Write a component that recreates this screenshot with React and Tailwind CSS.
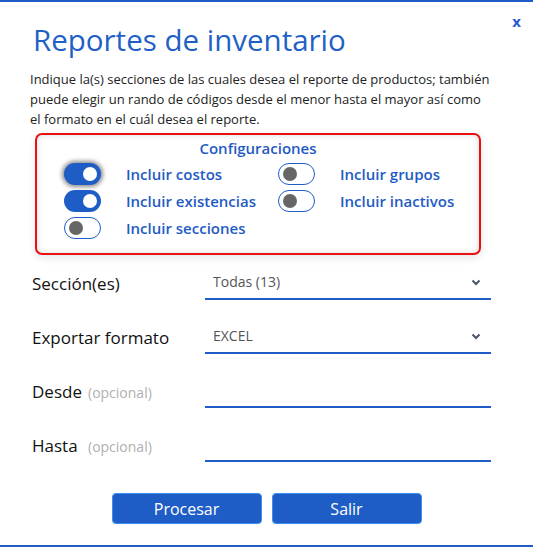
import React from "react";

function Toggle({ on, focus }) {
  return (
    <div
      className={
        "w-[37px] h-[22px] rounded-full flex items-center px-[4px] " +
        (on
          ? "bg-[#1f5dc6] justify-end"
          : "border border-[#1f5dc6] bg-white justify-start") +
        (focus ? " shadow-[0_0_4px_2px_rgba(0,0,0,0.45)]" : "")
      }
    >
      <div
        className={
          "w-[14px] h-[14px] rounded-full " + (on ? "bg-white" : "bg-[#666]")
        }
      />
    </div>
  );
}

function ToggleRow({ on, focus, label }) {
  return (
    <div className="flex items-center h-[22px]">
      <Toggle on={on} focus={focus} />
      <span className="ml-[25px] text-[15px] text-[#1f5bc4] font-semibold leading-none">
        {label}
      </span>
    </div>
  );
}

function Chevron() {
  return (
    <svg width="10" height="7" viewBox="0 0 10 7" className="mr-[10px]">
      <path d="M1.5 1.5 L5 5 L8.5 1.5" stroke="#4a5568" strokeWidth="2" fill="none" />
    </svg>
  );
}

function FieldRow({ label, hint, value, select }) {
  return (
    <div className="flex h-[54px] items-start">
      <div className="w-[173px] pt-[14px] flex items-baseline">
        <span className={"text-[17px] text-[#111] leading-[23px] " + (hint ? "w-[56px]" : "")}>{label}</span>
        {hint && <span className="text-[14px] text-[#b0b0b0]">{hint}</span>}
      </div>
      <div className="w-[286px] h-[42px] border-b-2 border-[#1f5dc6] flex items-start justify-between">
        <span className="pl-[8px] pt-[14px] text-[14px] leading-[19px] text-[#555]">{value}</span>
        {select && (
          <div className="pt-[21px]">
            <Chevron />
          </div>
        )}
      </div>
    </div>
  );
}

export default function App() {
  return (
    <div
      className="w-[533px] h-[547px] bg-white border-t-[2px] border-b-[2px] border-[#1f5dc6] relative"
      style={{ fontFamily: '"Open Sans", "Noto Sans", sans-serif' }}
    >
      <div className="absolute right-[12px] top-[8px] text-[15px] font-bold text-[#2a5bd7]">x</div>
      <h1 className="pl-[33px] pt-[18px] text-[29.5px] leading-[40px] text-[#1f5fc6] font-normal">
        Reportes de inventario
      </h1>
      <p className="pl-[30px] pr-[40px] mt-[9px] text-[13px] leading-[20px] text-[#222]">
        Indique la(s) secciones de las cuales desea el reporte de productos; también puede elegir un rando de códigos desde el menor hasta el mayor así como el formato en el cuál desea el reporte.
      </p>
      <div className="ml-[35px] mt-[4px] w-[446px] h-[122px] border-2 border-[#e81010] rounded-[7px] shadow-[inset_0_0_6px_rgba(0,0,0,0.15),0_3px_8px_rgba(0,0,0,0.1)] pt-[3px]">
        <div className="text-center text-[15px] text-[#1f5bc4] font-semibold leading-[20px]">
          Configuraciones
        </div>
        <div className="flex pl-[27px] mt-[5px]">
          <div className="w-[214px] flex flex-col gap-[5px]">
            <ToggleRow on focus label="Incluir costos" />
            <ToggleRow on label="Incluir existencias" />
            <ToggleRow label="Incluir secciones" />
          </div>
          <div className="flex flex-col gap-[5px]">
            <ToggleRow label="Incluir grupos" />
            <ToggleRow label="Incluir inactivos" />
          </div>
        </div>
      </div>
      <div className="pl-[32px] mt-[3px]">
        <FieldRow label="Sección(es)" value="Todas (13)" select />
        <FieldRow label="Exportar formato" value="EXCEL" select />
        <FieldRow label="Desde" hint="(opcional)" />
        <FieldRow label="Hasta" hint="(opcional)" />
      </div>
      <div className="flex justify-center gap-[10px] mt-[19px]">
        <button className="w-[150px] h-[31px] rounded-[4px] bg-[#1f5dc6] border border-[#3d8ef0] text-white text-[16px]">
          Procesar
        </button>
        <button className="w-[150px] h-[31px] rounded-[4px] bg-[#1f5dc6] border border-[#3d8ef0] text-white text-[16px]">
          Salir
        </button>
      </div>
    </div>
  );
}
